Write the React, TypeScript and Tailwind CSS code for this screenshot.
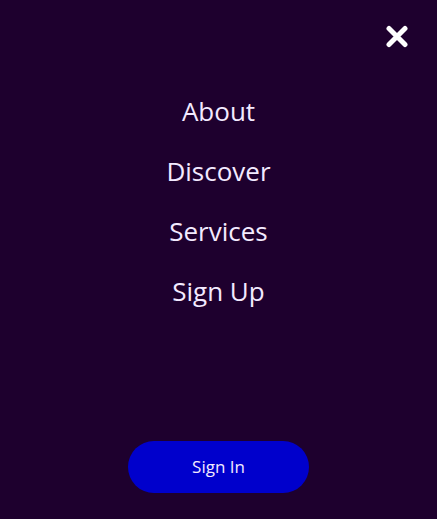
export default function App() {
  const links = ["About", "Discover", "Services", "Sign Up"];
  return (
    <div className="relative flex h-[519px] w-full flex-col items-center bg-[#1e002e] font-['Open_Sans',sans-serif] text-[#f3eaff]">
      <button className="absolute right-[28px] top-[25px] text-white" aria-label="Close menu">
        <svg width="24" height="23" viewBox="0 0 24 23">
          <path d="M4 3.5 L20 19.5 M20 3.5 L4 19.5" stroke="currentColor" strokeWidth="5" strokeLinecap="round" />
        </svg>
      </button>

      <nav className="mt-[93px] flex flex-col items-center gap-[24px]">
        {links.map((l) => (
          <a key={l} href="#" className="h-[36px] text-[26px] leading-[36px]">
            {l}
          </a>
        ))}
      </nav>

      <button className="mt-auto mb-[26px] h-[52px] w-[181px] rounded-full bg-[#0000cc] text-[17px] text-[#f3eaff]">
        Sign In
      </button>
    </div>
  );
}
